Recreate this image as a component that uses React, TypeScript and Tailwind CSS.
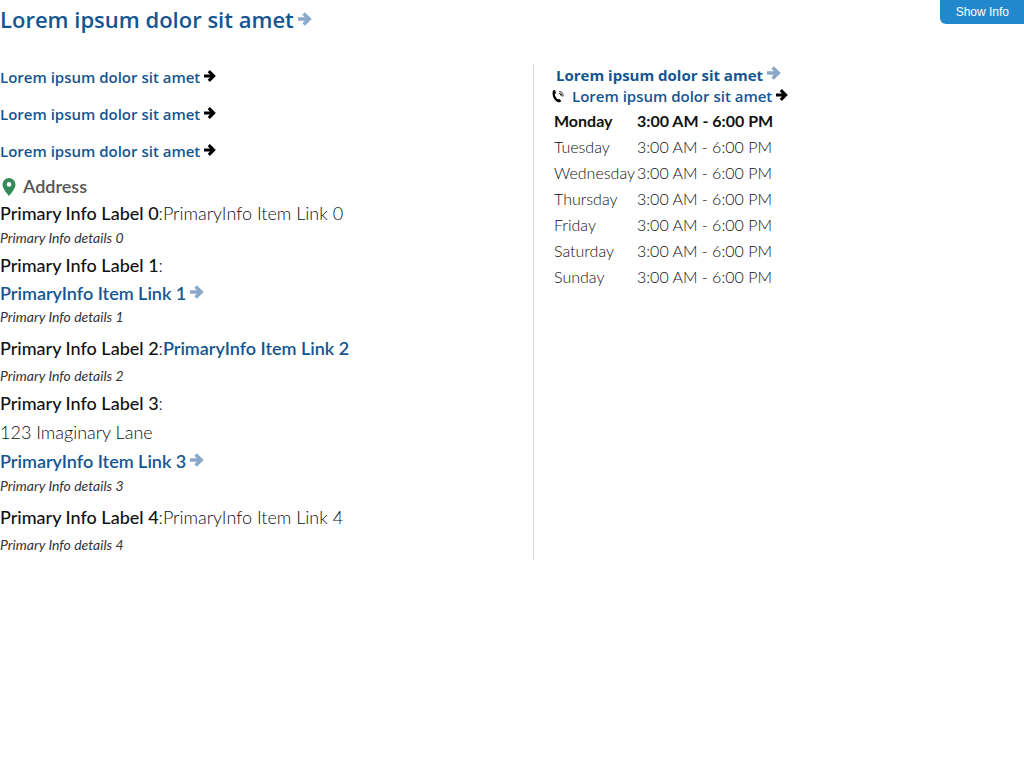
type Tone = "soft" | "dark";

function Arrow({ tone, className = "" }: { tone: Tone; className?: string }) {
  return (
    <svg
      aria-hidden="true"
      viewBox="0 0 14 14"
      className={`${tone === "soft" ? "h-3.5 w-3.5 text-[#8aa9c9]" : "h-3 w-3 text-black"} shrink-0 ${className}`}
      fill="none"
      stroke="currentColor"
      strokeWidth="3.6"
    >
      <path d="M0 7h11M5.600 1.400L11.200 7l-5.600 5.600" />
    </svg>
  );
}

function PinIcon() {
  return (
    <svg aria-hidden="true" viewBox="0 0 14 18" className="mt-0.5 h-[18px] w-3.5 shrink-0" fill="#348a57">
      <path fillRule="evenodd" d="M7 0a6.5 6.5 0 0 0-6.5 6.5C.5 11 7 18 7 18s6.5-7 6.5-11.500A6.500 6.500 0 0 0 7 0zm0 4a2.400 2.400 0 1 1 0 4.800A2.400 2.400 0 0 1 7 4z" />
    </svg>
  );
}

function PhoneIcon() {
  return (
    <svg aria-hidden="true" viewBox="0 0 13 14" className="h-3.5 w-[13px] shrink-0" fill="none">
      <path d="M.8 2.200C1.100 1.300 2 .9 3 1l1 3-1.200 1.300c.3 2 1.300 3.700 2.800 5l1.700-.4 2 2.100c-.7 1.200-2.200 1.600-3.600 1C2 11.200-.2 6 .8 2.200z" fill="#000" />
      <path d="M6.800 5.200 8 3.800l1 3M7 2.600c2.300-.7 4.300 1.600 4.200 4.800M9.300 4.500l.8 3" stroke="#222" strokeWidth=".9" />
    </svg>
  );
}

const linkText = "Lorem ipsum dolor sit amet";
const days = ["Monday", "Tuesday", "Wednesday", "Thursday", "Friday", "Saturday", "Sunday"];

function Label({ n }: { n: number }) {
  return (
    <>
      <span className="font-medium">Primary Info Label {n}</span>
      <span className="font-light">:</span>
    </>
  );
}

function Details({ n, className }: { n: number; className: string }) {
  return <p className={`text-sm leading-[18px] text-[#333] italic ${className}`}>Primary Info details {n}</p>;
}

function ItemLink({ n }: { n: number }) {
  return (
    <a href="#" className="inline-flex items-center gap-1 font-semibold text-[#145691]">
      PrimaryInfo Item Link {n}
      <Arrow tone="soft" className="mb-0.5" />
    </a>
  );
}

export default function App() {
  return (
    <main className="bg-white font-[Lato,'Open_Sans',sans-serif] text-[#111]">
      <header className="flex h-16 items-start justify-between">
        <h1 className="font-['Open_Sans',sans-serif] text-[22px] leading-[38px] font-semibold text-[#145691]">
          <a href="#" className="flex items-center gap-1">
            {linkText}
            <Arrow tone="soft" />
          </a>
        </h1>
        <button type="button" className="h-6 rounded-bl-md bg-[#2288ce] pr-[15px] pl-4 font-['Liberation_Sans',Arial,sans-serif] text-xs text-white">
          Show Info
        </button>
      </header>

      <div className="grid grid-cols-[534fr_490fr]">
        <section className="border-r border-[#d8d8d8] pb-1.5">
          <ul className="flex flex-col gap-[11px] font-['Open_Sans',sans-serif] text-[15px]">
            {[0, 1, 2].map((i) => (
              <li key={i} className="flex leading-[26px]">
                <a href="#" className="flex items-center gap-1 font-semibold text-[#145691]">
                  {linkText}
                  <Arrow tone="dark" className="mb-0.5" />
                </a>
              </li>
            ))}
          </ul>

          <h2 className="mt-[9px] flex items-center gap-[7px] pl-0.5 text-lg leading-[26px] font-semibold text-[#555]">
            <PinIcon />
            Address
          </h2>

          <div className="text-lg leading-7">
            <div>
              <p><Label n={0} /><span className="font-light">PrimaryInfo Item Link 0</span></p>
              <Details n={0} className="mt-0.5" />
            </div>
            <div className="mt-1">
              <p><Label n={1} /></p>
              <p className="flex"><ItemLink n={1} /></p>
              <Details n={1} className="mt-px" />
            </div>
            <div className="mt-2">
              <p><Label n={2} /><a href="#" className="font-semibold text-[#145691]">PrimaryInfo Item Link 2</a></p>
              <Details n={2} className="mt-[5px]" />
            </div>
            <div className="mt-1">
              <p><Label n={3} /></p>
              <p className="mt-px font-light">123 Imaginary Lane</p>
              <p className="mt-px flex"><ItemLink n={3} /></p>
              <Details n={3} className="mt-0.5" />
            </div>
            <div className="mt-2">
              <p><Label n={4} /><span className="font-light">PrimaryInfo Item Link 4</span></p>
              <Details n={4} className="mt-[5px]" />
            </div>
          </div>
        </section>

        <section className="pl-[18px]">
          <div className="flex pl-1 font-['Open_Sans',sans-serif] text-[15px] leading-[22px]">
            <a href="#" className="flex items-center gap-1 font-bold text-[#145691]">
              {linkText}
              <Arrow tone="soft" className="mb-1" />
            </a>
          </div>
          <div className="flex items-center gap-[7px] font-['Open_Sans',sans-serif] text-[15px] leading-5">
            <PhoneIcon />
            <a href="#" className="flex items-center gap-1 font-semibold text-[#145691]">
              {linkText}
              <Arrow tone="dark" className="mb-0.5" />
            </a>
          </div>
          <table className="mt-0.5 ml-0.5 border-collapse text-left leading-[26px]">
            <tbody>
              {days.map((day) => (
                <tr key={day} className={day === "Monday" ? "font-bold" : "font-light"}>
                  <th scope="row" className={`w-[83px] p-0 ${day === "Monday" ? "font-bold" : "font-light"}`}>{day}</th>
                  <td className="p-0">3:00 AM - 6:00 PM</td>
                </tr>
              ))}
            </tbody>
          </table>
        </section>
      </div>
    </main>
  );
}
